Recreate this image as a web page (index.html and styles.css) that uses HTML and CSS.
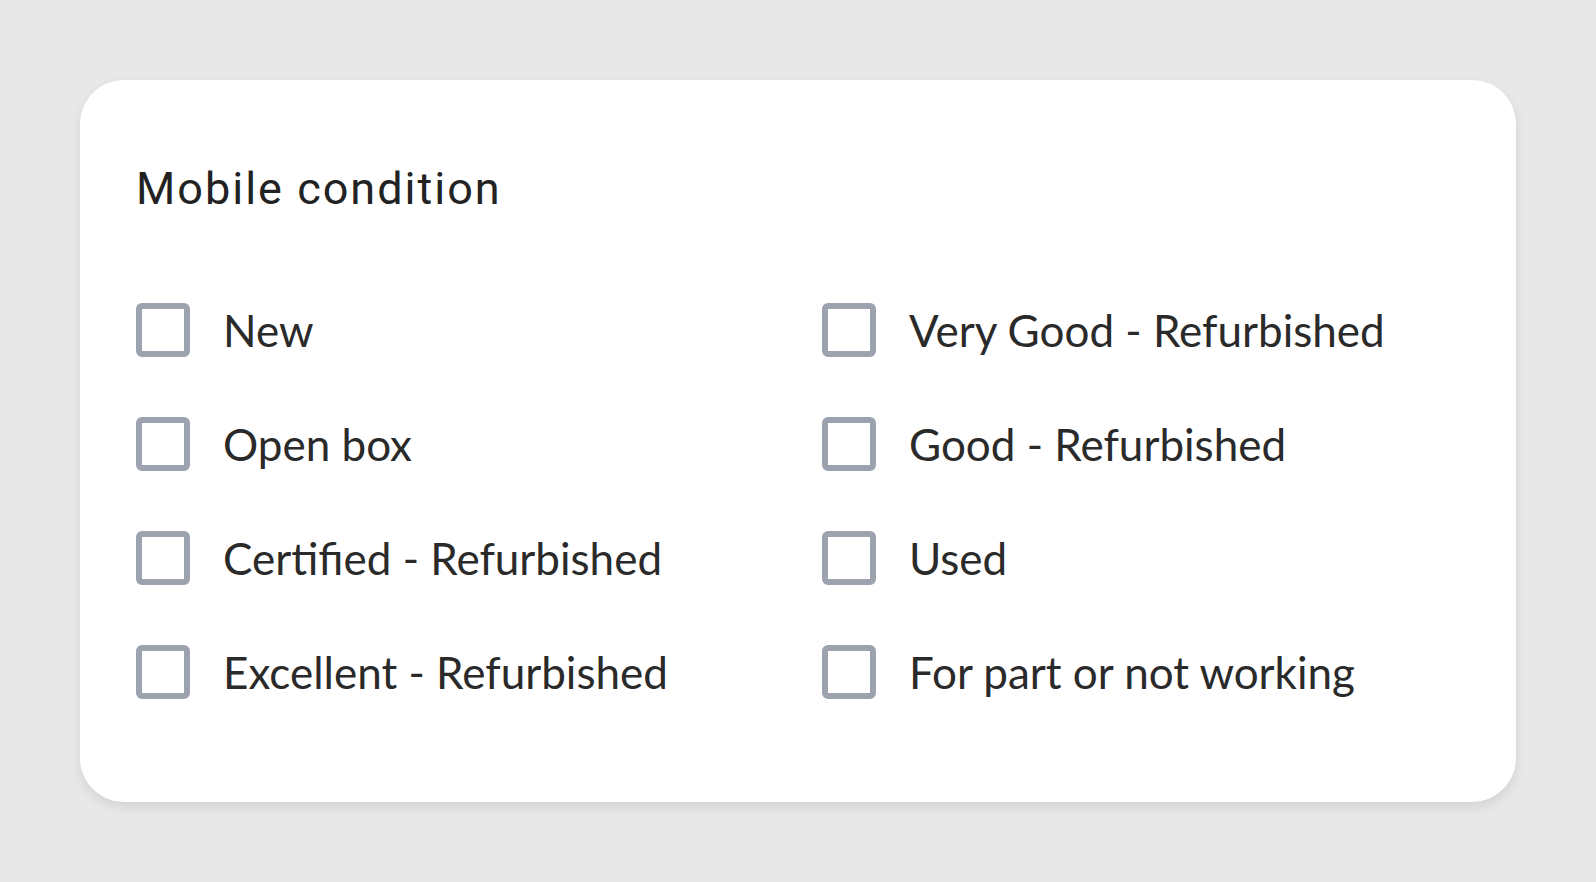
FILE: index.html
```html
<!DOCTYPE html>
<html lang="en">
<head>
    <meta charset="UTF-8">
    <meta name="viewport" content="width=device-width, initial-scale=1.0">
    <title>Mobile condition</title>
    <link rel="stylesheet" href="styles.css">
</head>
<body>
    <div class="card">
        <h2 class="title">Mobile condition</h2>
        <div class="options">
            <label class="option"><input type="checkbox" name="condition" value="new"><span>New</span></label>
            <label class="option"><input type="checkbox" name="condition" value="very-good"><span>Very Good - Refurbished</span></label>
            <label class="option"><input type="checkbox" name="condition" value="open-box"><span>Open box</span></label>
            <label class="option"><input type="checkbox" name="condition" value="good"><span>Good - Refurbished</span></label>
            <label class="option"><input type="checkbox" name="condition" value="certified"><span>Certified - Refurbished</span></label>
            <label class="option"><input type="checkbox" name="condition" value="used"><span>Used</span></label>
            <label class="option"><input type="checkbox" name="condition" value="excellent"><span>Excellent - Refurbished</span></label>
            <label class="option"><input type="checkbox" name="condition" value="parts"><span>For part or not working</span></label>
        </div>
    </div>
</body>
</html>
```

FILE: styles.css
```css
* {
    margin: 0;
    padding: 0;
    box-sizing: border-box;
}

body {
    background: #e8e8e8;
    padding: 80px;
    font-family: 'Lato', sans-serif;
}

.card {
    background: #fff;
    border-radius: 44px;
    padding: 82px 56px 103px;
    box-shadow: 0 5px 12px rgba(0, 0, 0, 0.09);
}

.title {
    font-family: 'Roboto', sans-serif;
    font-size: 45px;
    font-weight: 400;
    line-height: normal;
    letter-spacing: 2px;
    color: #222;
}

.options {
    display: grid;
    grid-template-columns: 1fr 1fr;
    column-gap: 48px;
    row-gap: 60px;
    margin-top: 88px;
}

.option {
    display: flex;
    align-items: center;
    gap: 33px;
    height: 54px;
    cursor: pointer;
}

.option input {
    appearance: none;
    -webkit-appearance: none;
    flex: none;
    width: 54px;
    height: 54px;
    border: 6px solid #9ca3af;
    border-radius: 6px;
    background: #fff;
    cursor: pointer;
}

.option input:checked {
    background: #9ca3af;
}

.option span {
    font-size: 44px;
    line-height: 54px;
    color: #2a2a2a;
}
```
